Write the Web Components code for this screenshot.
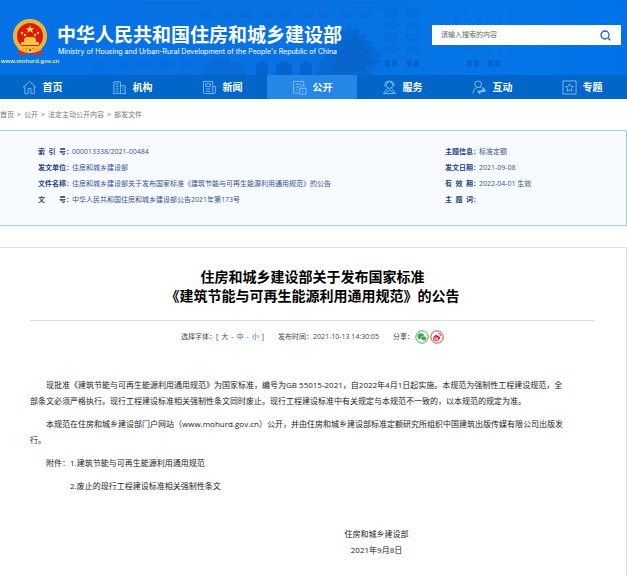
<!DOCTYPE html>
<html lang="zh-CN">
<head>
<meta charset="utf-8">
<title>住房和城乡建设部关于发布国家标准《建筑节能与可再生能源利用通用规范》的公告</title>
<style>
  html { background: #fff; }
  body {
    margin: 0; min-height: 100vh; display: flex; flex-direction: column; overflow-x: hidden;
    font-family: "Open Sans", "Noto Sans CJK SC", sans-serif; color: #222;
  }
  doc-article { flex: 1; }
</style>
</head>
<body>
<site-header></site-header>
<site-nav>
  <nav-item icon="home">首页</nav-item>
  <nav-item icon="building">机构</nav-item>
  <nav-item icon="news">新闻</nav-item>
  <nav-item icon="open" active>公开</nav-item>
  <nav-item icon="service">服务</nav-item>
  <nav-item icon="interact">互动</nav-item>
  <nav-item icon="topic">专题</nav-item>
</site-nav>
<bread-crumb></bread-crumb>
<meta-panel>
  <meta-list>
    <meta-row label="索 引 号">000013338/2021-00484</meta-row>
    <meta-row label="发文单位">住房和城乡建设部</meta-row>
    <meta-row label="文件名称">住房和城乡建设部关于发布国家标准《建筑节能与可再生能源利用通用规范》的公告</meta-row>
    <meta-row label="文 号">中华人民共和国住房和城乡建设部公告2021年第173号</meta-row>
  </meta-list>
  <meta-list>
    <meta-row label="主题信息">标准定额</meta-row>
    <meta-row label="发文日期">2021-09-08</meta-row>
    <meta-row label="有 效 期">2022-04-01 生效</meta-row>
    <meta-row label="主 题 词"></meta-row>
  </meta-list>
</meta-panel>
<doc-article>
  <span slot="title">住房和城乡建设部关于发布国家标准<br>《建筑节能与可再生能源利用通用规范》的公告</span>
  <article-tools slot="tools"></article-tools>
  <doc-para>现批准《建筑节能与可再生能源利用通用规范》为国家标准，编号为GB 55015-2021，自2022年4月1日起实施。本规范为强制性工程建设规范，全<br>部条文必须严格执行。现行工程建设标准相关强制性条文同时废止。现行工程建设标准中有关规定与本规范不一致的，以本规范的规定为准。</doc-para>
  <doc-para>本规范在住房和城乡建设部门户网站（www.mohurd.gov.cn）公开，并由住房和城乡建设部标准定额研究所组织中国建筑出版传媒有限公司出版发<br>行。</doc-para>
  <doc-para>附件：1.建筑节能与可再生能源利用通用规范</doc-para>
  <doc-para deep>2.废止的现行工程建设标准相关强制性条文</doc-para>
  <doc-sign>住房和城乡建设部<br>2021年9月8日</doc-sign>
</doc-article>

<script>
const define = (name, html, setup) => customElements.define(name, class extends HTMLElement {
  constructor() {
    super();
    this.attachShadow({ mode: 'open' }).innerHTML = html;
  }
  connectedCallback() { if (setup) setup(this, this.shadowRoot); }
});

/* Faint facade of window frames behind the header */
function facade() {
  let s = '';
  for (let y = 10; y < 56; y += 12)
    for (let x = 385; x < 425; x += 22)
      s += `<path d="M${x} ${y}h5v6h-5zM${x + 7} ${y}h5v6h-5z"/>`;
  for (let x = 455; x < 515; x += 11) s += `<path d="M${x} 14v7h4M${x} 44v7h4"/>`;
  for (let x = 95; x < 190; x += 22) s += `<path d="M${x} 61h4v6h-4zM${x + 7} 61h4v6h-4z"/>`;
  for (let x = 200; x < 380; x += 20) s += `<path d="M${x} 12h5v5h-5zM${x + 6} 12h5v5h-5z"/>`;
  return s;
}

define('site-header', `
<style>
  :host { display: flex; position: relative; height: 75px; align-items: center; justify-content: space-between;
    box-sizing: border-box; padding: 0 6px 0 3px; overflow: hidden;
    background: linear-gradient(90deg, #0671e6 0, #0872e2 50%, #0476e8 80%, #0072e8 100%); }
  .scene { position: absolute; left: 0; top: 0; width: 627px; height: 75px; }
  .brand { position: relative; display: flex; color: #fff; }
  .logo { display: flex; flex-direction: column; align-items: center; width: 54px; margin-top: 9px; }
  .logo svg { width: 36px; height: 37px; display: block; }
  .logo span { font: bold 6px/10px "Liberation Sans", sans-serif; color: #dcec8c; white-space: nowrap; }
  .names { margin-top: 12px; white-space: nowrap; }
  h1 { margin: 0; font: bold 19px/24px "Noto Sans CJK SC", sans-serif; }
  p { margin: 0; font: 7px/12px Inter, sans-serif; padding-left: 1px; }
  form { position: relative; display: flex; width: 189px; height: 20px; margin-bottom: 5px; background: #fff; }
  input { flex: 1; min-width: 0; border: 0; padding: 0 9px; background: none; outline: 0;
    font: 7px/20px "Open Sans", "Noto Sans CJK SC", sans-serif; color: #555; }
  input::placeholder { color: #666; opacity: 1; }
  button { border: 0; background: none; padding: 0; width: 31px; display: grid; place-items: center; }
</style>
<svg class="scene" viewBox="0 0 627 75" aria-hidden="true">
  <path d="M140 3h290M200 8h230M430 3v72" stroke="#0a62cf" stroke-width="2" opacity=".12"/>
  <g fill="#0860cc" fill-opacity=".3" stroke="#0558c4" opacity=".3">${facade()}</g>
  <g fill="#0554bd" opacity=".5">
    <path d="M256 75V66q6-9 12 0v9zM276 75V66q8-10 16 0v9zM300 75V66q6-9 12 0v9z"/>
    <path d="M385 60h5v7h-5zM392 60h5v7h-5zM407 60h5v7h-5zM414 60h5v7h-5zM467 60h5v7h-5zM474 60h5v7h-5zM488 60h5v7h-5zM495 60h5v7h-5z"/>
  </g>
  <g fill="#0759bd">
    <path opacity=".4" d="M316 75l5-8-4-3 9-5-3-4 8-3-3-5 7-3-1-6 6-1 1-7 5 2 3-8 4 6 5-2 2 8 7-2-2 6 9 1-4 5 8 1-4 4 9 3-6 4 5 4-8 3 4 5-7 1 2 4z"/>
    <path opacity=".3" d="M330 72l8-14-3-3 9-7 1-8 6-1 4-9 3 9 7 2-2 8 8 3-4 5 6 6-8 3 2 6z"/>
    <path opacity=".25" d="M200 75l6-8-3-3 9-3 4-6 5 4 8-3 2 6 14 0-3 6 5 7z"/>
  </g>
</svg>
<div class="brand">
  <div class="logo">
    <svg viewBox="0 0 36 37" role="img" aria-label="国徽">
      <path d="M8 27l-2 8 5 1 7-2 7 2 5-1-2-8z" fill="#e32a1b"/>
      <circle cx="18" cy="17" r="15" fill="#e0180f" stroke="#edbd3c" stroke-width="4"/>
      <circle cx="18" cy="17" r="15" fill="none" stroke="#d18c22" stroke-width="1" stroke-dasharray="1 2"/>
      <path d="M18 6l1 3h3l-2 2 1 3-3-2-3 2 1-3-2-2h3z" fill="#ffdc4c"/>
      <g fill="#ffdc4c"><circle cx="10" cy="14" r="1.2"/><circle cx="13" cy="16" r="1.2"/><circle cx="23" cy="16" r="1.2"/><circle cx="26" cy="14" r="1.2"/></g>
      <path d="M12 20l2-2h8l2 2v3h3v3H9v-3h3z" fill="#f4c73d"/>
      <path d="M7 27h22v2H7z" fill="#f2ba38"/>
      <circle cx="18" cy="31" r="3" fill="#f4c73d"/><circle cx="18" cy="31" r="1.2" fill="#d8341b"/>
      <path d="M6 30l7 3M30 30l-7 3" stroke="#f0b335" stroke-width="1"/>
    </svg>
    <span>www.mohurd.gov.cn</span>
  </div>
  <div class="names">
    <h1>中华人民共和国住房和城乡建设部</h1>
    <p>Ministry of Housing and Urban-Rural Development of the People's Republic of China</p>
  </div>
</div>
<form onsubmit="return false">
  <input type="text" aria-label="搜索" placeholder="请输入搜索的内容">
  <button type="submit" aria-label="搜索"><svg width="11" height="11" viewBox="0 0 11 11" fill="none" stroke="#1465cc" stroke-width="1.3"><circle cx="5" cy="5" r="4"/><path d="M8 8l2.400 2.400"/></svg></button>
</form>`);

define('site-nav', `
<style>
  :host { display: block; background: #0066c8; }
  nav { display: flex; height: 24px; margin-left: -3px; }
</style>
<nav aria-label="主导航"><slot></slot></nav>`);

const icons = {
  home: '<path d="M1 8l7-6.500 7 6.500M3 7v7.500h3.500V9h3v5.500H13V7"/>',
  building: '<path d="M2 14V2h7v12M9 6h5v8M1 14.500h14M4 4.500h3M4 7h3M4 9.500h3M4 12h3M11 8.500h1.500M11 11h1.500"/>',
  news: '<path d="M12 14.500H3q-1.500 0-1.500-1.500V1.500h10V13q0 1.500 1.500 1.500T14.500 13V7H12M4 4h5v3H4zM4 9.500h5M4 12h5"/>',
  open: '<path d="M7 14H1.500V1.500h11V6M4 4.500h6M4 7.500h4M4 10.500h2M8 9h7v6H8zM9.500 9V7.500q0-1.500 2-1.500t2 1.500M11.500 11v2"/>',
  service: '<circle cx="8" cy="5.500" r="3.500"/><path d="M3 7V5q.5-4 5-4t5 4v2M5.500 9L1.500 14.500h13L10.500 9M3.500 14L8 10.500l4.500 3.500"/>',
  interact: '<circle cx="6.500" cy="4.500" r="3.500"/><path d="M1 14.500q0-5 4-6.500M8 8h1.500"/><path d="M5.500 12h8.500v-1.500L11.500 8v2.500M14 12.500H6L8.500 15v-2" fill="#83bbf2"/>',
  topic: '<path d="M1 1h14v14H1zM8 4l1.300 2.600 2.900.4-2.100 2 .5 2.900L8 10.500l-2.600 1.400.5-2.900-2.100-2 2.900-.4z"/>'
};

define('nav-item', `
<style>
  :host { display: flex; flex: 1; }
  a { flex: 1; display: flex; align-items: center; justify-content: center; gap: 6px; color: #fff; text-decoration: none;
    font: bold 10px/16px "Noto Sans CJK SC", sans-serif; white-space: nowrap; }
  :host([active]) a { background: #2587e5; }
  svg { width: 15px; height: 15px; fill: none; stroke: #83bbf2; }
</style>
<a href="#"><svg viewBox="0 0 16 16" aria-hidden="true"></svg><slot></slot></a>`,
(el, root) => {
  root.querySelector('svg').innerHTML = icons[el.getAttribute('icon')];
  if (el.hasAttribute('active')) root.querySelector('a').setAttribute('aria-current', 'page');
});

define('bread-crumb', `
<style>
  :host { display: block; }
  nav { display: flex; gap: 3px; height: 31px; align-items: center; font-size: 7px; line-height: 12px; color: #777; white-space: nowrap; }
  a { color: inherit; text-decoration: none; }
</style>
<nav aria-label="面包屑"><a href="#">首页</a><span>&gt;</span><a href="#">公开</a><span>&gt;</span><a href="#">法定主动公开内容</a><span>&gt;</span><a href="#">部发文件</a></nav>`);

define('meta-panel', `
<style>
  :host { display: grid; grid-template-columns: 407px 1fr; padding: 13px 0 17px 38px; background: #f7fbff;
    border: 1px solid #a9c9ee; border-left: 0; }
</style>
<slot></slot>`);

define('meta-list', `<style>:host { display: block; }</style><slot></slot>`);

define('meta-row', `
<style>
  :host { display: flex; font-size: 7px; line-height: 16px; min-height: 16px; color: #36528f; white-space: nowrap; }
  b { width: 28px; text-align: justify; text-align-last: justify; color: #24437f; }
  i { width: 6px; font-style: normal; font-weight: bold; }
</style>
<b></b><i>：</i><span><slot></slot></span>`,
(el, root) => { root.querySelector('b').textContent = el.getAttribute('label'); });

define('doc-article', `
<style>
  :host { display: block; margin-top: 21px; padding: 19px 31px 0 30px; border: 1px solid #dedee2; border-width: 1px 1px 0 0; }
  h2 { margin: 0; padding-bottom: 15px; border-bottom: 1px solid #dcdcdc; text-align: center; color: #000;
    font: bold 14px/19px "Noto Sans CJK SC", sans-serif; }
  .body { display: flex; flex-direction: column; gap: 7px; padding-top: 28px; }
</style>
<h2><slot name="title"></slot></h2>
<slot name="tools"></slot>
<div class="body"><slot></slot></div>`);

define('article-tools', `
<style>
  :host { display: flex; justify-content: center; align-items: center; gap: 14px; height: 24px; padding-top: 4px; font-size: 7px; line-height: 12px; color: #444; white-space: nowrap; }
  div { display: flex; align-items: center; }
  button { border: 0; padding: 0; background: none; font: inherit; color: #1a66cc; display: block; }
  .sizes { gap: 3px; }
  .share { gap: 1px; }
  svg { width: 14px; height: 14px; display: block; }
</style>
<div class="sizes"><span>选择字体：[</span><button>大</button><span>-</span><button>中</button><span>-</span><button>小</button><span>]</span></div>
<div>发布时间：2021-10-13 14:30:05</div>
<div class="share"><span>分享：</span>
  <button aria-label="分享到微信"><svg viewBox="0 0 14 14"><circle cx="7" cy="7" r="6.200" fill="#fff" stroke="#4caf50"/><ellipse cx="5.800" cy="6" rx="3.300" ry="2.700" fill="#3fa845"/><path d="M3.500 7.500L3.300 9.500 5.500 8.500z" fill="#3fa845"/><ellipse cx="8.700" cy="8.300" rx="2.700" ry="2.200" fill="#3fa845" stroke="#fff" stroke-width=".5"/><path d="M9 10l1.700 1-.2-1.800z" fill="#3fa845"/></svg></button>
  <button aria-label="分享到微博"><svg viewBox="0 0 14 14"><circle cx="7" cy="7" r="6.200" fill="#fff" stroke="#e63b48"/><path d="M3 8.500Q3.300 6 6 4.800q1.200-.3 1 1 2.400-.8 2.200.8 1.300.6.800 2Q9 11 6.200 11 3.200 10.800 3 8.500z" fill="#e02535"/><ellipse cx="6.200" cy="8.700" rx="2" ry="1.300" fill="#fff"/><circle cx="6" cy="8.800" r=".8" fill="#e02535"/><path d="M8.300 3.200q2.700 0 2.700 3" fill="none" stroke="#e02535" stroke-width=".9"/></svg></button>
</div>`);

define('doc-para', `
<style>
  :host { display: block; font-size: 8px; line-height: 16px; text-indent: 16px; white-space: nowrap; }
  :host([deep]) { text-indent: 40px; }
</style>
<slot></slot>`);

define('doc-sign', `
<style>
  :host { display: block; margin-top: 25px; padding: 0 0 18px 128px; font-size: 8px; line-height: 16px; text-align: center; }
</style>
<slot></slot>`);
</script>
</body>
</html>
